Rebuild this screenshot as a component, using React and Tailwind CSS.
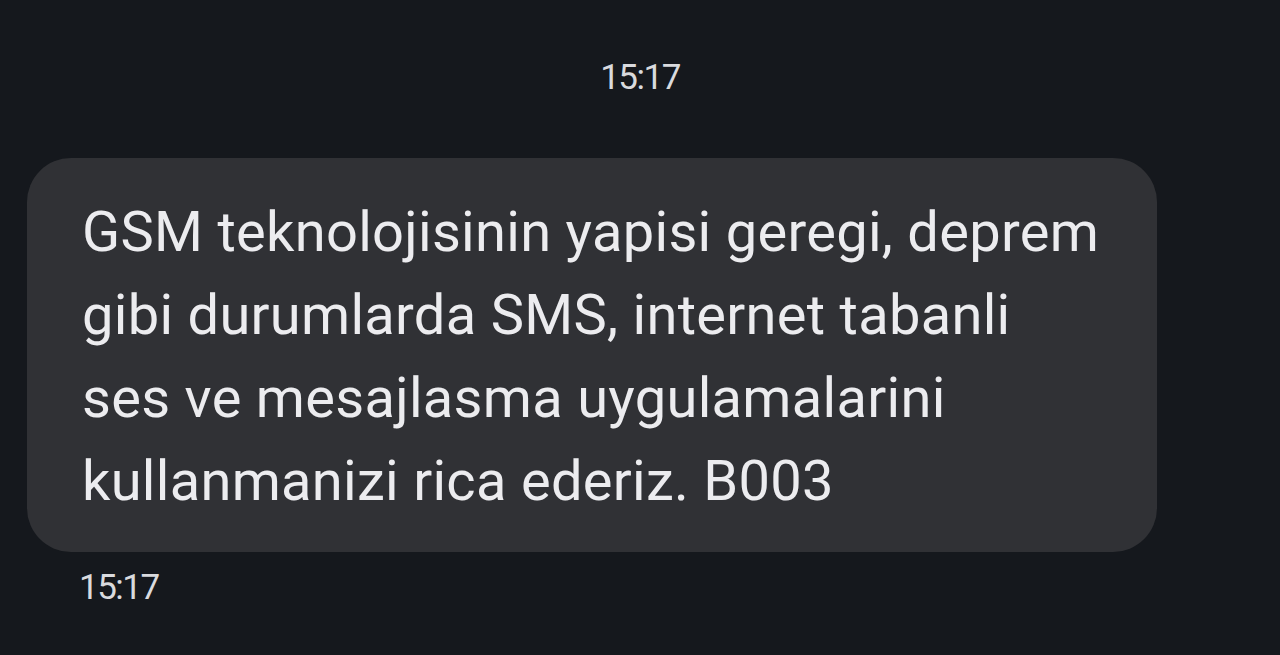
export default function App() {
  return (
    <div
      className="w-[1280px] h-[655px] overflow-hidden bg-[#15181d] text-[#e3e4e8]"
      style={{ fontFamily: "Roboto, 'Open Sans', sans-serif" }}
    >
      <div className="pt-[56px] flex justify-center">
        <span className="text-[35px] leading-[44px] tracking-[-1.5px] text-[#d9dade]">15:17</span>
      </div>
      <div className="mt-[58px] ml-[27px] w-[1130px] h-[394px] rounded-[44px] bg-[#303135] pl-[55px] pt-[33px]">
        <p className="text-[56px] leading-[83px] tracking-[0.3px] text-[#ececef]">
          GSM teknolojisinin yapisi geregi, deprem
          <br />
          gibi durumlarda SMS, internet tabanli
          <br />
          ses ve mesajlasma uygulamalarini
          <br />
          kullanmanizi rica ederiz. B003
        </p>
      </div>
      <div className="mt-[14px] ml-[79px]">
        <span className="text-[35px] leading-[44px] tracking-[-1.5px] text-[#d9dade]">15:17</span>
      </div>
    </div>
  );
}
